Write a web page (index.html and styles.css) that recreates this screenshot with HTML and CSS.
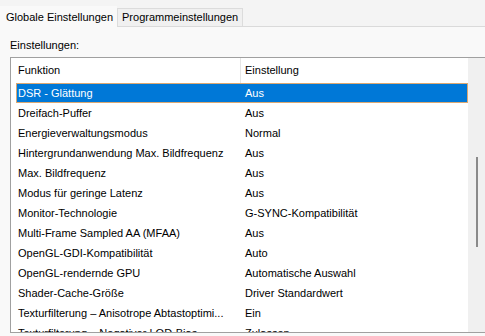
FILE: index.html
```html
<!DOCTYPE html>
<html lang="de">
<head>
    <meta charset="UTF-8">
    <title>Globale Einstellungen</title>
    <link rel="stylesheet" href="styles.css">
</head>
<body>
    <div class="tabs">
        <div class="tab active">Globale Einstellungen</div>
        <div class="tab">Programmeinstellungen</div>
    </div>

    <div class="panel">
        <div class="panel-label">Einstellungen:</div>
        <div class="listbox">
            <div class="list-inner">
                <div class="list-head">
                    <div class="col col-name">Funktion</div>
                    <div class="col col-value">Einstellung</div>
                </div>
                <div class="row selected"><div class="col col-name">DSR - Glättung</div><div class="col col-value">Aus</div></div>
                <div class="row"><div class="col col-name">Dreifach-Puffer</div><div class="col col-value">Aus</div></div>
                <div class="row"><div class="col col-name">Energieverwaltungsmodus</div><div class="col col-value">Normal</div></div>
                <div class="row"><div class="col col-name">Hintergrundanwendung Max. Bildfrequenz</div><div class="col col-value">Aus</div></div>
                <div class="row"><div class="col col-name">Max. Bildfrequenz</div><div class="col col-value">Aus</div></div>
                <div class="row"><div class="col col-name">Modus für geringe Latenz</div><div class="col col-value">Aus</div></div>
                <div class="row"><div class="col col-name">Monitor-Technologie</div><div class="col col-value">G-SYNC-Kompatibilität</div></div>
                <div class="row"><div class="col col-name">Multi-Frame Sampled AA (MFAA)</div><div class="col col-value">Aus</div></div>
                <div class="row"><div class="col col-name">OpenGL-GDI-Kompatibilität</div><div class="col col-value">Auto</div></div>
                <div class="row"><div class="col col-name">OpenGL-rendernde GPU</div><div class="col col-value">Automatische Auswahl</div></div>
                <div class="row"><div class="col col-name">Shader-Cache-Größe</div><div class="col col-value">Driver Standardwert</div></div>
                <div class="row"><div class="col col-name">Texturfilterung – Anisotrope Abtastoptimi...</div><div class="col col-value">Ein</div></div>
                <div class="row"><div class="col col-name">Texturfilterung – Negativer LOD-Bias</div><div class="col col-value">Zulassen</div></div>
            </div>
            <div class="scrollbar">
                <div class="thumb"></div>
            </div>
        </div>
    </div>
</body>
</html>
```

FILE: styles.css
```css
body {
    margin: 0;
    font-family: "Liberation Sans", Arial, sans-serif;
    font-size: 11px;
    color: #000;
    background-color: #f9f9f9;
    height: 336px;
    overflow: hidden;
}

.tabs {
    display: flex;
    align-items: flex-end;
    height: 26px;
    background-color: #f4f4f4;
    border-bottom: 1px solid #dadada;
}

.tab {
    height: 17px;
    line-height: 17px;
    padding: 0 4px;
    background-color: #f0f0f0;
    border: 1px solid #dcdcdc;
    border-bottom: none;
    white-space: nowrap;
}

.tab.active {
    height: 20px;
    line-height: 20px;
    padding: 0 3px 0 5px;
    margin-bottom: -1px;
    background-color: #f9f9f9;
    border-color: #f9f9f9;
}

.panel {
    padding: 0 0 0 10px;
}

.panel-label {
    height: 30px;
    line-height: 36px;
}

.listbox {
    display: flex;
    height: 274px;
    margin-right: -1px;
    border: 1px solid #a0a0a0;
    background-color: #fff;
    overflow: hidden;
}

.list-inner {
    flex: 1;
    padding-left: 5px;
}

.list-head, .row {
    display: flex;
    white-space: nowrap;
}

.list-head {
    height: 25px;
    line-height: 25px;
}

.list-head .col-name {
    border-right: 1px solid #e5e5e5;
}

.row {
    height: 20px;
    line-height: 20px;
}

.row.selected {
    background-color: #0078d7;
    color: #fff;
    box-shadow: inset 0 0 0 1px #dba872;
}

.col-name {
    width: 222px;
    padding-left: 2px;
    overflow: hidden;
}

.col-value {
    padding-left: 5px;
}

.list-head .col-value {
    padding-left: 4px;
}

.scrollbar {
    width: 17px;
    background-color: #f0f0f0;
    display: flex;
    justify-content: center;
    padding-top: 99px;
}

.thumb {
    width: 2px;
    height: 90px;
    background-color: #8a8a8a;
}
```
